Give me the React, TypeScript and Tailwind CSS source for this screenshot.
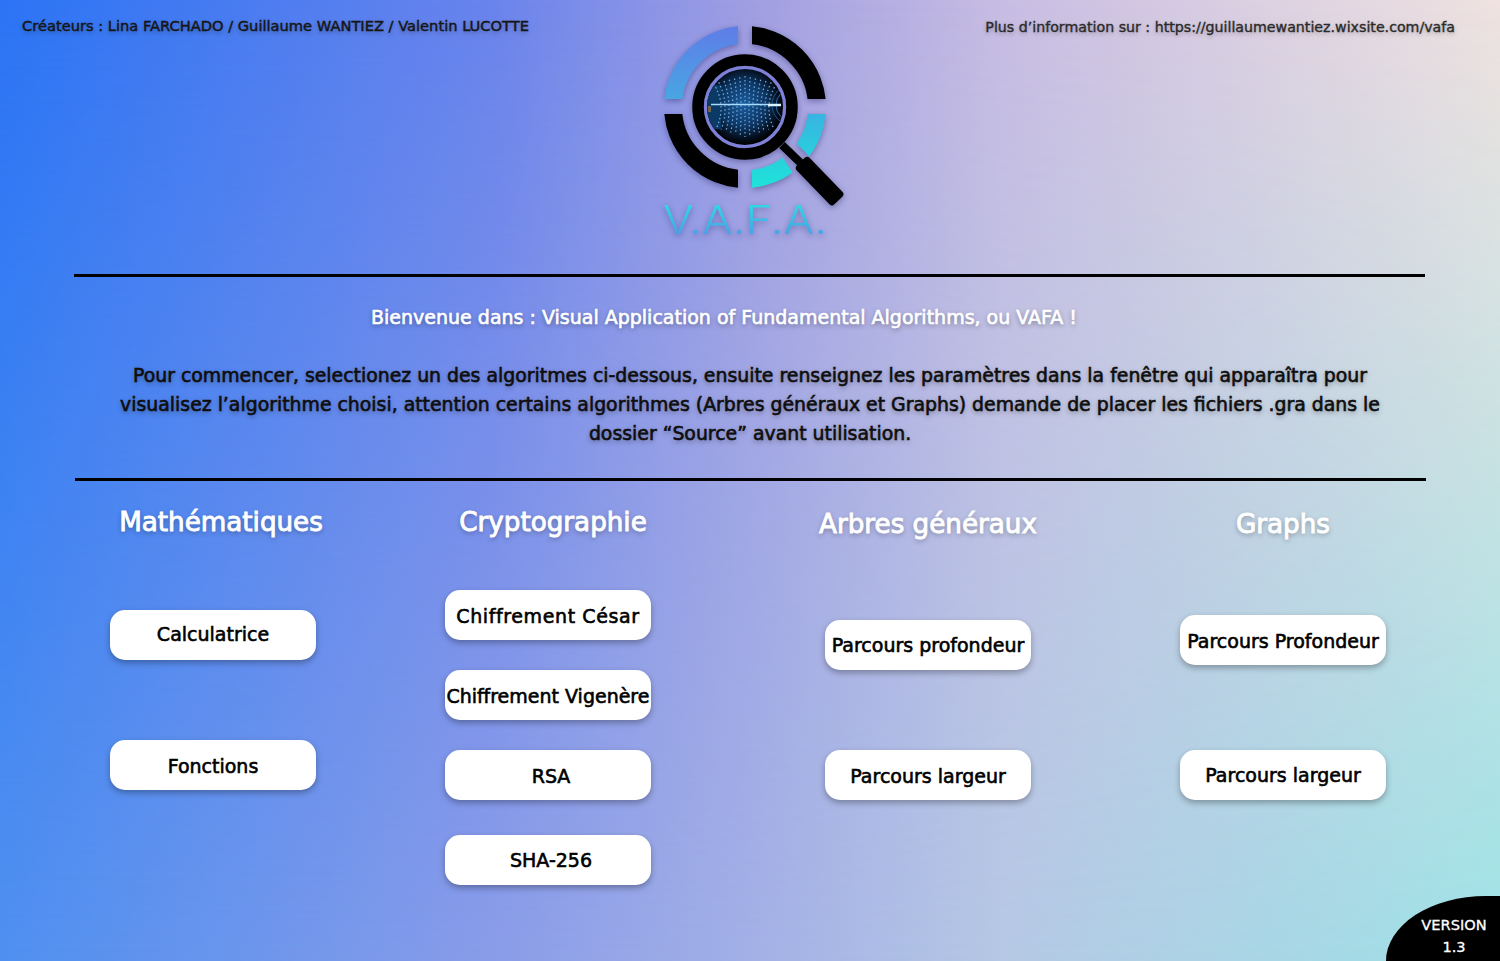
const streaks = [-30, -25, -20, -15, -10, -5, 0, 5, 10, 15, 20, 25, 30];

const headingClass =
  "whitespace-nowrap text-[26.2px] leading-[40px] [-webkit-text-stroke:0.9px_#fff] [text-shadow:0_2px_5px_rgba(0,0,0,0.35)]";

function Logo() {
  return (
    <svg
      viewBox="640 10 220 240"
      className="w-[220px] h-[240px] [filter:drop-shadow(0_2px_3px_rgba(0,0,60,0.35))]"
    >
      <defs>
        <linearGradient id="tl" gradientUnits="userSpaceOnUse" x1="0" y1="26" x2="0" y2="99">
          <stop offset="0" stopColor="#5f7ce8" />
          <stop offset="1" stopColor="#48a6e2" />
        </linearGradient>
        <linearGradient id="br" gradientUnits="userSpaceOnUse" x1="0" y1="114" x2="0" y2="188">
          <stop offset="0" stopColor="#38b4e2" />
          <stop offset="1" stopColor="#1ee3d8" />
        </linearGradient>
        <linearGradient id="word" gradientUnits="userSpaceOnUse" x1="0" y1="205" x2="0" y2="236">
          <stop offset="0" stopColor="#2fd8e6" />
          <stop offset="1" stopColor="#4a9ee8" />
        </linearGradient>
        <radialGradient id="lens" cx="0.48" cy="0.46" r="0.52">
          <stop offset="0" stopColor="#1a5c9c" />
          <stop offset="0.55" stopColor="#0e3765" />
          <stop offset="0.85" stopColor="#050f1e" />
          <stop offset="1" stopColor="#000" />
        </radialGradient>
        <clipPath id="q1"><rect x="650" y="15" width="88" height="84" /></clipPath>
        <clipPath id="q2"><rect x="752" y="15" width="88" height="84" /></clipPath>
        <clipPath id="q3"><rect x="650" y="114" width="88" height="84" /></clipPath>
        <clipPath id="q4"><polygon points="767,114 850,114 850,197" /></clipPath>
        <clipPath id="q5"><polygon points="752,140 771,140 811,200 752,200" /></clipPath>
        <clipPath id="lensClip"><circle cx="745" cy="107" r="38" /></clipPath>
      </defs>
      <circle cx="745" cy="107" r="72" fill="none" stroke="url(#tl)" strokeWidth="18" clipPath="url(#q1)" />
      <circle cx="745" cy="107" r="72" fill="none" stroke="#000" strokeWidth="18" clipPath="url(#q2)" />
      <circle cx="745" cy="107" r="72" fill="none" stroke="#000" strokeWidth="18" clipPath="url(#q3)" />
      <circle cx="745" cy="107" r="72" fill="none" stroke="url(#br)" strokeWidth="18" clipPath="url(#q4)" />
      <circle cx="745" cy="107" r="72" fill="none" stroke="url(#br)" strokeWidth="18" clipPath="url(#q5)" />

      <circle cx="745" cy="107" r="47" fill="none" stroke="#000" strokeWidth="11.5" />
      <circle cx="745" cy="107" r="39.5" fill="url(#lens)" stroke="#7f80d8" strokeWidth="3" />
      <g clipPath="url(#lensClip)">
        <rect x="707" y="85" width="14" height="44" fill="#0c3a66" />
        <rect x="708" y="106" width="3" height="6" fill="#b5803a" opacity="0.6" />
        {streaks.map((d) => (
          <path
            key={d}
            d={`M${745 + d * 1.05} ${76 + Math.abs(d) * 0.25} Q${745 + d * 0.6} 105 ${745 + d * 0.95} ${137 - Math.abs(d) * 0.3}`}
            fill="none"
            stroke="#86c4f4"
            strokeOpacity="0.85"
            strokeWidth="1.2"
            strokeDasharray="1.5 2.5"
          />
        ))}
        <circle cx="792" cy="105" r="16" fill="none" stroke="#2b6ea8" strokeWidth="1" />
        <circle cx="792" cy="105" r="20" fill="none" stroke="#1c4f80" strokeWidth="1" />
        <line x1="711" y1="104.5" x2="768" y2="104.5" stroke="#a8dcff" strokeWidth="1.4" />
        <line x1="768" y1="105" x2="781" y2="105" stroke="#d8f2ff" strokeWidth="2.5" />
      </g>

      <line x1="782" y1="145" x2="810" y2="172" stroke="#000" strokeWidth="8" />
      <rect x="-6" y="-9" width="54" height="18" rx="3.5" transform="translate(805 166) rotate(46)" fill="#000" />

      <text
        x="663"
        y="234"
        textLength="164"
        lengthAdjust="spacingAndGlyphs"
        fontFamily="Inter, sans-serif"
        fontWeight="300"
        fontSize="40"
        fill="url(#word)"
      >
        V.A.F.A.
      </text>
    </svg>
  );
}

function Btn({ label, className = "" }: { label: string; className?: string }) {
  return (
    <button
      className={`w-[206px] h-[50px] bg-white rounded-[15px] shadow-[0_3px_6px_rgba(0,0,0,0.3)] text-black text-[19px] [-webkit-text-stroke:0.6px_#000] whitespace-nowrap ${className}`}
    >
      {label}
    </button>
  );
}

export default function App() {
  return (
    <div className="relative h-[961px] overflow-hidden font-['DejaVu_Sans',sans-serif] bg-[linear-gradient(90deg,#2b74f5_0%,#6a84ec_33%,#a09ee2_50%,#c8bde3_67%,#efe2e0_100%)]">
      <div className="absolute inset-0 bg-[linear-gradient(90deg,#4f90f0_0%,#8a9ce8_33%,#a2b0e6_50%,#b5c8e4_67%,#9de2e6_100%)] [mask-image:linear-gradient(to_bottom,transparent,#000)]" />

      <div className="relative">
        <header className="h-[274px] grid grid-cols-[640px_220px_1fr]">
          <p className="pl-[22px] pt-[15px] whitespace-nowrap text-[14.65px] [-webkit-text-stroke:0.45px_#161616] text-[#161616] [text-shadow:0_2px_4px_rgba(0,0,0,0.35)]">
            Créateurs : Lina FARCHADO / Guillaume WANTIEZ / Valentin LUCOTTE
          </p>
          <div className="pt-[10px]">
            <Logo />
          </div>
          <p className="pt-[17px] pr-[45px] text-right whitespace-nowrap text-[14.2px] [-webkit-text-stroke:0.35px_#2a2a2a] text-[#2a2a2a] [text-shadow:0_2px_4px_rgba(0,0,0,0.3)]">
            Plus d’information sur : https://guillaumewantiez.wixsite.com/vafa
          </p>
        </header>

        <hr className="ml-[74px] w-[1351px] border-0 h-[3px] bg-black" />

        <section className="h-[201px] pt-[26px] text-center leading-[29px]">
          <p className="pr-[52px] text-[19px] text-white [-webkit-text-stroke:0.6px_#fff] [text-shadow:0_2px_5px_rgba(0,0,0,0.4)]">
            Bienvenue dans : Visual Application of Fundamental Algorithms, ou VAFA !
          </p>
          <p className="mt-[29px] mx-auto w-[1290px] text-[18.86px] text-[#0e0e0e] [-webkit-text-stroke:0.6px_#0e0e0e] [text-shadow:0_2px_5px_rgba(0,0,0,0.4)]">
            Pour commencer, selectionez un des algoritmes ci-dessous, ensuite renseignez les paramètres dans la fenêtre qui apparaîtra pour visualisez l’algorithme choisi, attention certains algorithmes (Arbres généraux et Graphs) demande de placer les fichiers .gra dans le dossier “Source” avant utilisation.
          </p>
        </section>

        <hr className="ml-[75px] w-[1351px] border-0 h-[3px] bg-black" />

        <main className="flex pl-[110px] pt-[21px] text-white">
          <div className="w-[206px] flex flex-col items-center">
            <h2 className={`pl-[16px] ${headingClass}`}>Mathématiques</h2>
            <Btn label="Calculatrice" className="mt-[68px] pb-[2px]" />
            <Btn label="Fonctions" className="mt-[80px] pt-[3px]" />
          </div>
          <div className="ml-[129px] w-[206px] flex flex-col items-center">
            <h2 className={`pl-[10px] ${headingClass}`}>Cryptographie</h2>
            <Btn label="Chiffrement César" className="mt-[48px] pt-[3px] tracking-[0.6px]" />
            <Btn label="Chiffrement Vigenère" className="mt-[30px] pt-[3px]" />
            <Btn label="RSA" className="mt-[30px] pl-[6px] pt-[3px]" />
            <Btn label="SHA-256" className="mt-[35px] pl-[6px] pt-[1px]" />
          </div>
          <div className="ml-[174px] w-[206px] flex flex-col items-center pt-[2px]">
            <h2 className={headingClass}>Arbres généraux</h2>
            <Btn label="Parcours profondeur" className="mt-[76px]" />
            <Btn label="Parcours largeur" className="mt-[80px] pt-[3px]" />
          </div>
          <div className="ml-[149px] w-[206px] flex flex-col items-center pt-[2px]">
            <h2 className={headingClass}>Graphs</h2>
            <Btn label="Parcours Profondeur" className="mt-[71px] pt-[3px]" />
            <Btn label="Parcours largeur" className="mt-[85px] pt-[1px]" />
          </div>
        </main>
      </div>

      <div className="absolute right-0 bottom-0 w-[114px] h-[65px] bg-black rounded-tl-[100px_65px] flex flex-col items-center pl-[22px] pt-[18px] text-white text-[14.6px] [-webkit-text-stroke:0.3px_#fff] leading-[22px]">
        <span>VERSION</span>
        <span>1.3</span>
      </div>
    </div>
  );
}
